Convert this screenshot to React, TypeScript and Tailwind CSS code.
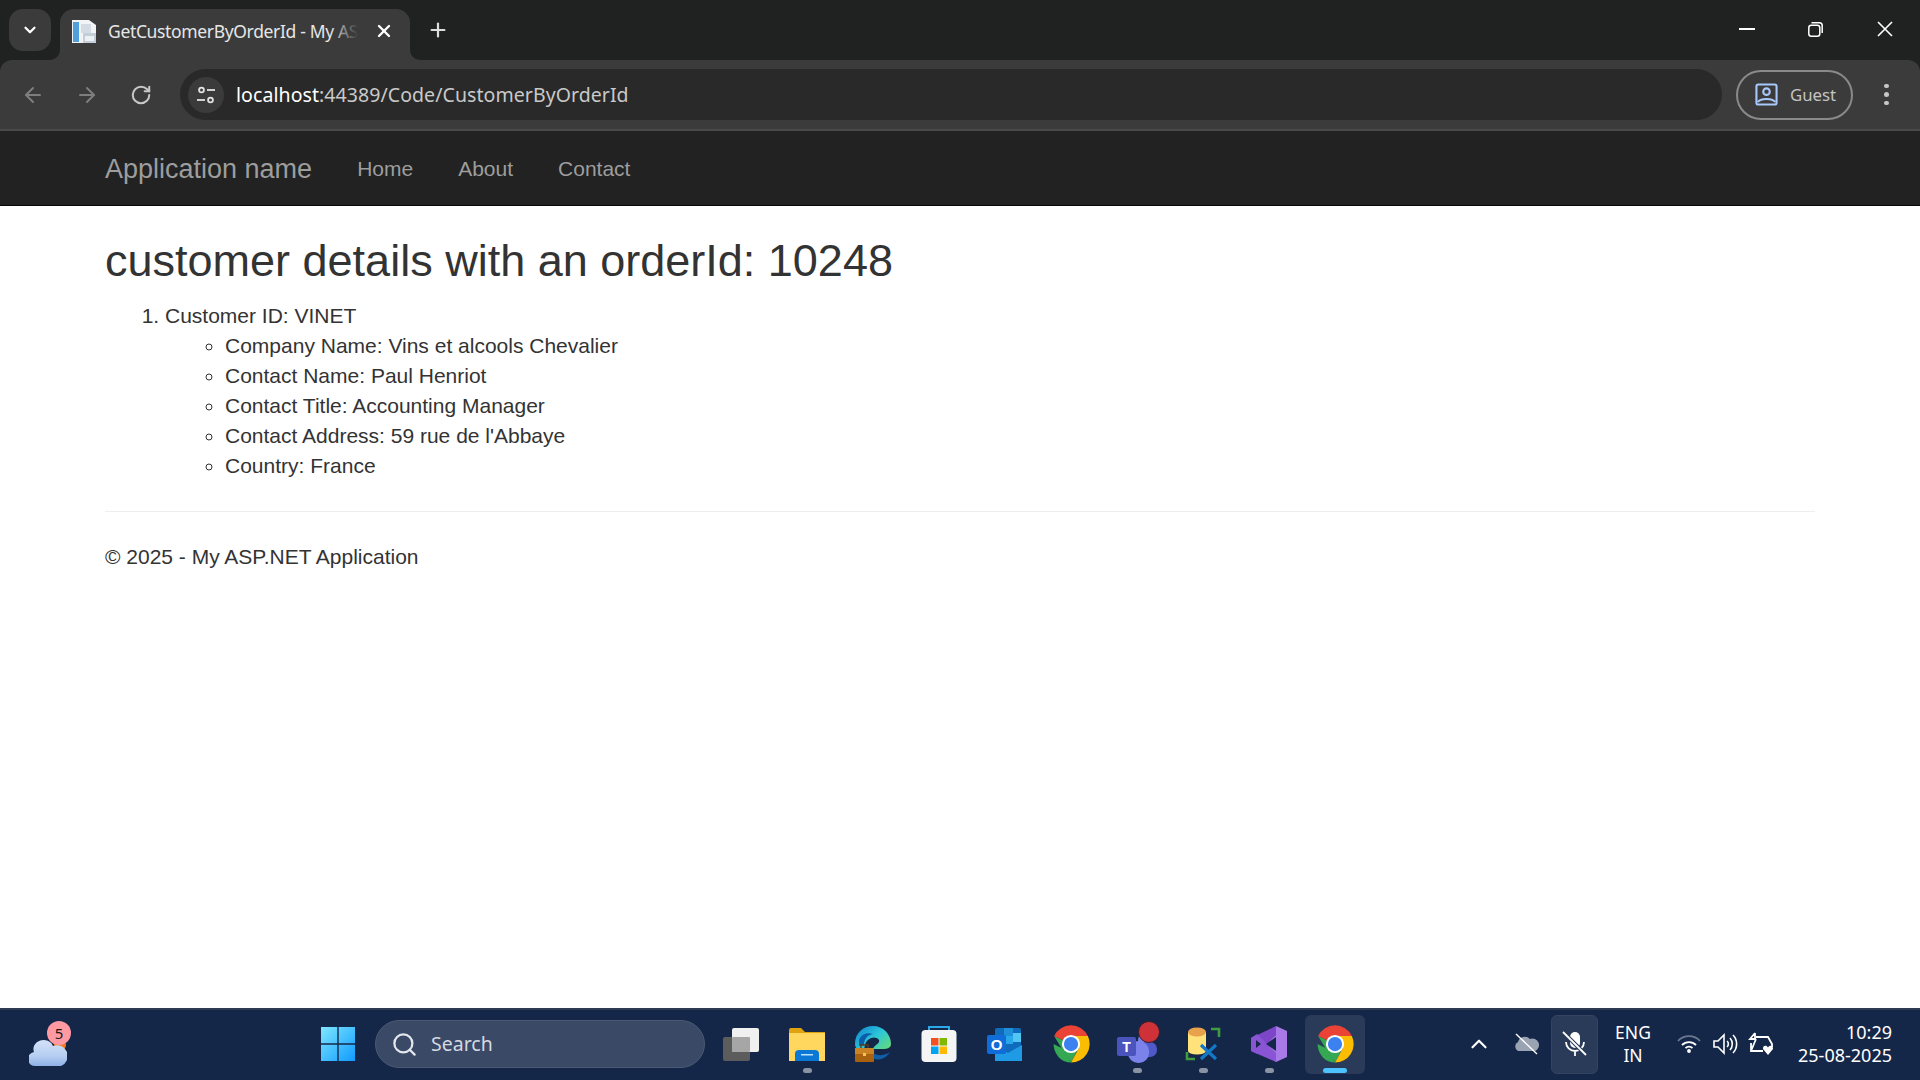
import React from "react";
import { ArrowLeft, ArrowRight, RotateCw, X, Plus, ChevronDown, ChevronUp, Search } from "lucide-react";

function Chrome({ size = 38 }: { size?: number }) {
  return (
    <svg width={size} height={size} viewBox="0 0 48 48">
      <path d="M24 24L2.7 14L13 31L24 47.5L34 28Z" fill="#34a853" />
      <path d="M2 24A22 23.5 0 0 0 24 47.5L14 30Z" fill="#34a853" />
      <path d="M24 24L2.7 14A23.5 23.5 0 0 1 45.3 14L24 14Z" fill="#ea4335" />
      <path d="M24 14H45.3A23.5 23.5 0 0 1 24 47.5L34 29Z" fill="#fbbc04" />
      <circle cx="24" cy="24" r="11.5" fill="#fff" />
      <circle cx="24" cy="24" r="9" fill="#3b82f0" />
    </svg>
  );
}

function TaskIcon({ children, dot, active }: { children: React.ReactNode; dot?: boolean; active?: boolean }) {
  return (
    <div className={`relative w-[60px] h-[59px] mr-[6px] flex items-center justify-center rounded-[6px] ${active ? "bg-[#2a3a59]" : ""}`}>
      {children}
      {dot && <div className="absolute bottom-[1px] left-[26px] w-[9px] h-[5px] rounded-full bg-[#8a93a3]" />}
      {active && <div className="absolute bottom-[1px] left-[18px] w-[24px] h-[5px] rounded-full bg-[#4cc2ff]" />}
    </div>
  );
}

export default function App() {
  return (
    <div className="w-[1920px] h-[1080px] overflow-hidden flex flex-col bg-white font-['Liberation_Sans',sans-serif] text-[#333]">
      {/* tab strip */}
      <div className="h-[60px] shrink-0 bg-[#202222] flex items-end pl-[9px] font-['Noto_Sans',sans-serif]">
        <div className="w-[42px] h-[42px] mb-[9px] rounded-[14px] bg-[#3b3b3b] flex items-center justify-center text-white">
          <ChevronDown size={18} strokeWidth={3} />
        </div>
        <div className="relative w-[350px] h-[51px] ml-[9px] bg-[#3b3b3b] rounded-t-[14px] flex items-center pl-[12px] pb-[7px] text-[#e6e6e6]">
          <svg className="absolute -left-[10px] bottom-0" width="10" height="10" viewBox="0 0 10 10"><path d="M10 0V10H0A10 10 0 0 0 10 0Z" fill="#3b3b3b" /></svg>
          <svg className="absolute -right-[10px] bottom-0" width="10" height="10" viewBox="0 0 10 10"><path d="M0 0V10H10A10 10 0 0 1 0 0Z" fill="#3b3b3b" /></svg>
          <svg width="24" height="24" viewBox="0 0 24 24" className="shrink-0">
            <path d="M0 1H17L24 6V24H0Z" fill="#f1f3f5" />
            <rect x="1" y="3" width="6" height="20" fill="#4f9fdc" />
            <rect x="9" y="5" width="10" height="9" fill="#d5dbe2" />
            <rect x="11" y="14" width="13" height="10" fill="#c4ced9" />
            <rect x="13" y="17" width="9" height="5" fill="#eef1f4" />
          </svg>
          <div className="relative ml-[12px] w-[250px] whitespace-nowrap overflow-visible text-[17.5px] tracking-[-0.35px]">
            GetCustomerByOrderId - My AS
            <div className="absolute right-0 top-0 bottom-0 w-[28px] bg-gradient-to-r from-transparent to-[#3b3b3b]" />
          </div>
          <X size={20} strokeWidth={2.8} className="ml-[16px] text-white" />
        </div>
        <Plus size={22} strokeWidth={2.4} className="ml-[17px] mb-[19px] text-[#dddddd]" />
        <div className="flex-1" />
        <div className="flex items-center h-[60px] text-white pb-[1px]">
          <div className="w-[16px] h-[2px] bg-white mr-[53px] mt-[-2px]" />
          <svg width="15" height="15" viewBox="0 0 15 15" fill="none" stroke="white" strokeWidth="1.5" className="mr-[54px] mt-[-1px]">
            <rect x="0.8" y="3.2" width="11" height="11" rx="2.5" />
            <path d="M3.5 0.8H11.5A2.8 2.8 0 0 1 14.2 3.6V11" />
          </svg>
          <svg width="16" height="16" viewBox="0 0 16 16" stroke="white" strokeWidth="1.6" className="mr-[27px] mt-[-1px]">
            <path d="M1 1L15 15M15 1L1 15" />
          </svg>
        </div>
      </div>

      {/* toolbar */}
      <div className="h-[71px] shrink-0 bg-[#202222]">
        <div className="h-full bg-[#3b3b3b] rounded-t-[12px] border-b-[2px] border-[#4a4a4a] flex items-center text-[#c7c7c7]">
          <ArrowLeft size={24} strokeWidth={2} className="ml-[21px] text-[#7e7e7e]" />
          <ArrowRight size={24} strokeWidth={2} className="ml-[30px] text-[#7e7e7e]" />
          <RotateCw size={22} strokeWidth={2.2} className="ml-[31px]" />
          <div className="ml-[28px] w-[1542px] h-[51px] rounded-full bg-[#292929] flex items-center pl-[8px]">
            <div className="w-[36px] h-[36px] rounded-full bg-[#3b3b3b] flex items-center justify-center">
              <svg width="20" height="20" viewBox="0 0 20 20" fill="none" stroke="#e3e3e3" strokeWidth="1.8">
                <circle cx="5.5" cy="5" r="2.4" /><path d="M11 5H19" />
                <circle cx="14.5" cy="15" r="2.4" /><path d="M1 15H9" />
              </svg>
            </div>
            <div className="ml-[12px] text-[19.5px] tracking-[0.07px] font-['Noto_Sans',sans-serif] text-[#c9c9c9]">
              <span className="text-white">localhost</span>:44389/Code/CustomerByOrderId
            </div>
          </div>
          <div className="ml-[14px] w-[117px] h-[50px] rounded-full border-[2px] border-[#8a8a8a] flex items-center pl-[17px] font-['Noto_Sans',sans-serif] text-[16.8px] text-[#c4c4c4]">
            <svg width="23" height="23" viewBox="0 0 24 24" fill="none" stroke="#a8c7fa" strokeWidth="2.2">
              <rect x="1.5" y="1.5" width="21" height="21" rx="2" />
              <circle cx="12" cy="9" r="3.4" />
              <path d="M3 20C5 15.5 19 15.5 21 20" />
            </svg>
            <span className="ml-[12px]">Guest</span>
          </div>
          <div className="ml-[31px] flex flex-col gap-[4px]">
            <div className="w-[4.5px] h-[4.5px] rounded-full bg-[#c7c7c7]" />
            <div className="w-[4.5px] h-[4.5px] rounded-full bg-[#c7c7c7]" />
            <div className="w-[4.5px] h-[4.5px] rounded-full bg-[#c7c7c7]" />
          </div>
        </div>
      </div>

      {/* site navbar */}
      <div className="h-[75px] shrink-0 bg-[#222] border-b-[1px] border-[#080808] flex items-center pl-[105px] pt-[1px] text-[#9d9d9d]">
        <span className="text-[27px] mt-[1px]">Application name</span>
        <span className="ml-[45px] text-[21px]">Home</span>
        <span className="ml-[45px] text-[21px]">About</span>
        <span className="ml-[45px] text-[21px]">Contact</span>
      </div>

      {/* page */}
      <div className="flex-1 px-[105px] text-[21px] leading-[30px]">
        <h2 className="mt-[30px] mb-[15px] text-[45px] leading-[49.5px]">customer details with an orderId: 10248</h2>
        <ol className="list-decimal pl-[60px]">
          <li>
            Customer ID: VINET
            <ul className="list-[circle] pl-[60px]">
              <li>Company Name: Vins et alcools Chevalier</li>
              <li>Contact Name: Paul Henriot</li>
              <li>Contact Title: Accounting Manager</li>
              <li>Contact Address: 59 rue de l'Abbaye</li>
              <li>Country: France</li>
            </ul>
          </li>
        </ol>
        <hr className="mt-[30px] mb-[30px] border-t-[1.5px] border-[#eee]" />
        <p>© 2025 - My ASP.NET Application</p>
      </div>

      {/* taskbar */}
      <div className="h-[72px] shrink-0 bg-[#152748] border-t-[2px] border-[#2f3b52] pb-[2px] flex items-center text-white font-['Noto_Sans',sans-serif]">
        <div className="relative w-[38px] h-[46px] ml-[29px]">
          <svg width="38" height="36" viewBox="0 0 38 36" className="absolute left-0 bottom-0">
            <defs><linearGradient id="c" x1="0" y1="0" x2="0" y2="1"><stop offset="0" stopColor="#d3e1f8" /><stop offset="0.6" stopColor="#b7cff2" /><stop offset="1" stopColor="#8fb0e6" /></linearGradient></defs>
            <circle cx="31" cy="14" r="6" fill="#f47a1f" />
            <path d="M7 35A7 7 0 0 1 5 21A10 9 0 0 1 24 15A9 9 0 0 1 32 35Z" fill="url(#c)" />
          </svg>
          <div className="absolute left-[18px] top-0 w-[24px] h-[24px] rounded-full bg-[#ff9aa2] text-[#1a1a1a] text-[15px] flex items-center justify-center">5</div>
        </div>
        <svg width="36" height="36" viewBox="0 0 36 36" className="ml-[253px]">
          <defs><linearGradient id="w" x1="0" y1="0" x2="1" y2="1"><stop offset="0" stopColor="#7fe6ff" /><stop offset="1" stopColor="#0f9bff" /></linearGradient></defs>
          <path d="M1 1H17.3V17.3H1ZM18.7 1H35V17.3H18.7ZM1 18.7H17.3V35H1ZM18.7 18.7H35V35H18.7Z" fill="url(#w)" />
        </svg>
        <div className="ml-[19px] w-[330px] h-[48px] rounded-full bg-[#3a4966] border-[1px] border-[#4a5873] flex items-center pl-[15px] text-[19.5px] text-[#d5d9e0]">
          <Search size={27} strokeWidth={2} className="text-[#e4e7ec]" />
          <span className="ml-[13px]">Search</span>
        </div>
        <div className="ml-[6px] flex items-center">
          <TaskIcon>
            <svg width="36" height="33" viewBox="0 0 36 33"><rect x="0" y="9" width="27" height="24" rx="2" fill="#5c5c5c" /><rect x="9" y="0" width="27" height="24" rx="2" fill="#f0f0f0" /><rect x="9" y="9" width="18" height="15" rx="1" fill="#a6a6a6" /></svg>
          </TaskIcon>
          <TaskIcon dot>
            <svg width="36" height="33" viewBox="0 0 36 33"><path d="M0 2A2 2 0 0 1 2 0H12L16 4H36V33H0Z" fill="#e0a30f" /><path d="M0 5H36V33H0Z" fill="#ffd75e" /><path d="M6 33V26A4 4 0 0 1 10 22H26A4 4 0 0 1 30 26V33Z" fill="#0a78d4" /><rect x="12" y="26" width="12" height="1.5" fill="#bfe0fa" /></svg>
          </TaskIcon>
          <TaskIcon>
            <svg width="36" height="36" viewBox="0 0 36 36">
              <defs><linearGradient id="e" x1="0" y1="0" x2="1" y2="0.9"><stop offset="0" stopColor="#0c7fd0" /><stop offset="0.5" stopColor="#2cc7d8" /><stop offset="1" stopColor="#6fdc6a" /></linearGradient></defs>
              <path d="M0 18C0 7 8 0 18 0C28 0 36 8 36 18C36 22 32 23 28 23H18C20 18 25 18 24 14C20 9 12 12 10 19C9 22 9 25 11 28C5 26 0 23 0 18Z" fill="url(#e)" />
              <path d="M4 14C6 8 12 6 18 8C12 9 9 13 9 19L4 20Z" fill="#0b5cab" />
              <path d="M14 28C20 37 30 34 35 26C29 30 22 30 18 27Z" fill="#0f5ea8" />
              <rect x="0" y="22" width="19" height="14" rx="1" fill="#a8620f" /><rect x="0" y="22" width="19" height="6" fill="#c98224" /><path d="M6 22V19H13V22" fill="none" stroke="#5c3a10" strokeWidth="1.4" /><rect x="8" y="27" width="3" height="3" fill="#f6c453" />
            </svg>
          </TaskIcon>
          <TaskIcon>
            <svg width="36" height="36" viewBox="0 0 36 36"><path d="M8 5V1H28V5" fill="none" stroke="#2aa8e8" strokeWidth="2" /><rect x="0.5" y="4" width="35" height="32" rx="4" fill="#f5f5f5" /><rect x="10" y="12" width="7.5" height="7.5" fill="#f25022" /><rect x="18.5" y="12" width="7.5" height="7.5" fill="#7fba00" /><rect x="10" y="20.5" width="7.5" height="7.5" fill="#00a4ef" /><rect x="18.5" y="20.5" width="7.5" height="7.5" fill="#ffb900" /></svg>
          </TaskIcon>
          <TaskIcon>
            <svg width="36" height="33" viewBox="0 0 36 33"><rect x="8" y="0" width="26" height="32" rx="2" fill="#0f6cbd" /><rect x="17" y="0" width="9" height="8" fill="#1e8fd8" /><rect x="26" y="5" width="8" height="9" fill="#52c6f3" /><rect x="17" y="8" width="9" height="8" fill="#28a8ea" /><path d="M8 17L21 25L35 17V33H8Z" fill="#1f9be6" /><rect x="0" y="7" width="19" height="19" rx="2" fill="#0f6cd8" /><text x="9.5" y="22" fontSize="15" fontFamily="Liberation Sans" fontWeight="700" fill="#fff" textAnchor="middle">O</text></svg>
          </TaskIcon>
          <TaskIcon><Chrome /></TaskIcon>
          <TaskIcon dot>
            <svg width="44" height="42" viewBox="0 0 44 42" className="ml-[4px] mt-[-4px]"><circle cx="28" cy="19" r="7" fill="#7b83eb" /><rect x="20" y="21" width="20" height="15" rx="7" fill="#5059c9" /><rect x="11" y="20" width="21" height="22" rx="10" fill="#7b83eb" /><rect x="0" y="16" width="19" height="19" rx="2" fill="#4b53bc" /><text x="9.5" y="31" fontSize="14" fontFamily="Liberation Sans" fontWeight="700" fill="#fff" textAnchor="middle">T</text><circle cx="32" cy="11" r="10.5" fill="#cf3138" stroke="#3a1f2e" strokeWidth="1" /></svg>
          </TaskIcon>
          <TaskIcon dot>
            <svg width="36" height="34" viewBox="0 0 36 34"><path d="M3 5H21V24H3Z" fill="#ffe27a" /><ellipse cx="12" cy="24" rx="9" ry="3.5" fill="#ffe27a" /><ellipse cx="12" cy="5" rx="9" ry="4.5" fill="#e8a24c" /><path d="M26 2H34V10M2 25V32H10" fill="none" stroke="#3f9b3f" strokeWidth="2.6" /><path d="M16 18L31 32M31 18L16 32" stroke="#1478c8" strokeWidth="3.2" /></svg>
          </TaskIcon>
          <TaskIcon dot>
            <svg width="36" height="36" viewBox="0 0 36 36">
              <path d="M25 0L36 5V31L25 36L9 20L25 9Z" fill="#a87ae8" />
              <path d="M25 0L0 12V25L6 28L25 9V0Z" fill="#7d45c8" />
              <path d="M25 36L0 25V12L6 8L25 27V36Z" fill="#8a55d4" />
              <path d="M5 14V22L10 18Z" fill="#152748" />
              <path d="M15 18L25 11V25Z" fill="#152748" />
            </svg>
          </TaskIcon>
          <TaskIcon active><Chrome /></TaskIcon>
        </div>
        <ChevronUp size={26} strokeWidth={2} className="ml-[95px]" />
        <svg width="26" height="22" viewBox="0 0 26 22" className="ml-[21px]"><path d="M5 18A5 5 0 0 1 5 9A7 7 0 0 1 17 6A6 6 0 0 1 22 18Z" fill="#9aa3b2" /><path d="M3 1L24 21" stroke="#fff" strokeWidth="1.4" /></svg>
        <div className="ml-[12px] w-[47px] h-[59px] rounded-[6px] bg-[#2a3a59] border-[1px] border-[#34435f] flex items-center justify-center">
          <svg width="26" height="26" viewBox="0 0 26 26" fill="none" stroke="#fff" strokeWidth="1.8">
            <rect x="8" y="1" width="10" height="16" rx="5" fill="#fff" stroke="none" />
            <path d="M4 11A9 9 0 0 0 22 11M13 20V25" />
            <path d="M1 1L24 24" stroke="#2a3a59" strokeWidth="4" />
            <path d="M1 1L24 24" />
          </svg>
        </div>
        <div className="ml-[10px] w-[50px] text-center text-[17.5px] leading-[23px]">ENG<br />IN</div>
        <svg width="24" height="18" viewBox="0 0 24 18" fill="none" stroke="#fff" strokeWidth="1.8" className="ml-[19px]">
          <path d="M1 6A15 15 0 0 1 23 6" stroke="#6c7890" /><path d="M5 10A10 10 0 0 1 19 10" /><path d="M8.5 13.2A5 5 0 0 1 15.5 13.2" /><circle cx="12" cy="16" r="1" fill="#fff" />
        </svg>
        <svg width="26" height="22" viewBox="0 0 26 22" fill="none" stroke="#fff" strokeWidth="1.6" className="ml-[12px]">
          <path d="M1 8H5L11 2V20L5 14H1Z" /><path d="M14 8A4 4 0 0 1 14 14M17 5A9 9 0 0 1 17 17M20 2A13 13 0 0 1 20 20" />
        </svg>
        <svg width="26" height="24" viewBox="0 0 26 24" fill="none" stroke="#fff" strokeWidth="1.8" className="ml-[9px]">
          <path d="M3 11V19H15M7 1L2 7H5M7 1V6M3 7H8M8 5H20L24 12V15M3 19L8 7" /><path d="M15 17L20 23L25 17C25.5 13.5 21.5 12.5 20 15.5C18.5 12.5 14.5 13.5 15 17Z" fill="#fff" stroke="none" />
        </svg>
        <div className="ml-auto mr-[28px] text-right text-[18px] leading-[23px]">10:29<br />25-08-2025</div>
      </div>
    </div>
  );
}
